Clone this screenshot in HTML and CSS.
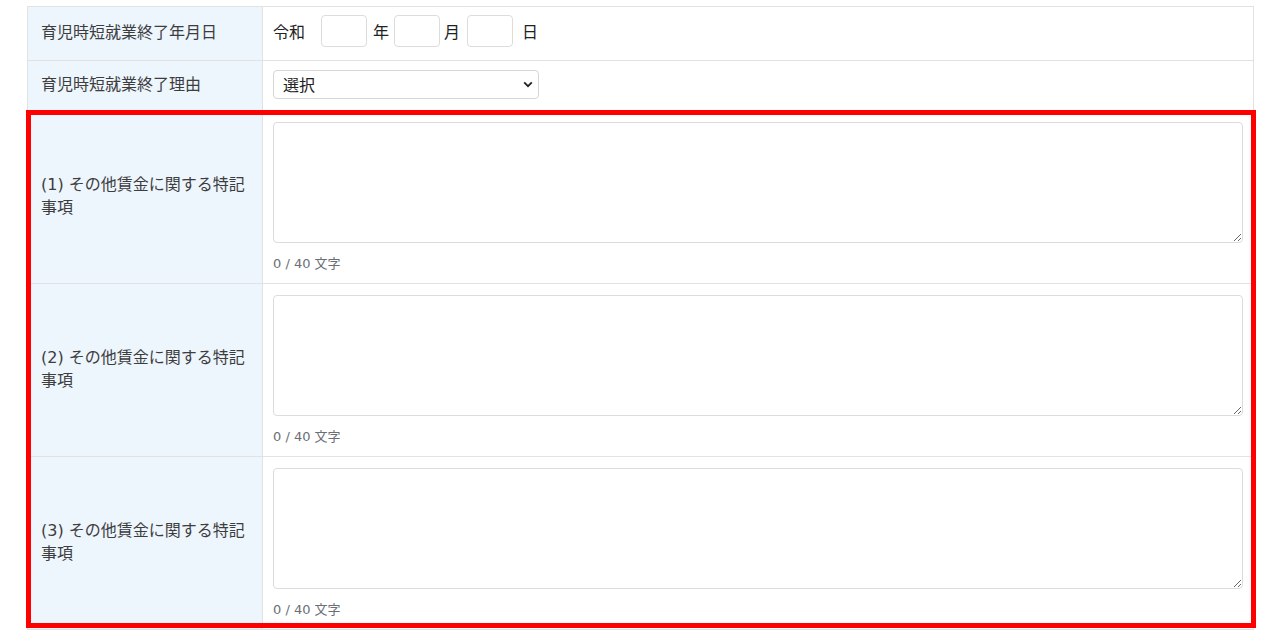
FILE: index.html
```html
<!DOCTYPE html>
<html lang="ja">
<head>
<meta charset="utf-8">
<link rel="stylesheet" href="styles.css">
</head>
<body>
<div class="wrap">
  <table class="form">
    <tr>
      <th class="label">育児時短就業終了年月日</th>
      <td class="cell date-cell">
        <div class="date">
          <span class="era">令和</span>
          <input class="num" type="text">
          <span class="year">年</span>
          <input class="num" type="text">
          <span class="month">月</span>
          <input class="num" type="text">
          <span class="day">日</span>
        </div>
      </td>
    </tr>
    <tr>
      <th class="label">育児時短就業終了理由</th>
      <td class="cell sel-cell">
        <div class="select">
          <span>選択</span>
          <svg class="chev" width="10" height="7" viewBox="0 0 10 7"><path d="M1.2 1.4 L5 5.2 L8.8 1.4" fill="none" stroke="#222" stroke-width="1.8"/></svg>
        </div>
      </td>
    </tr>
    <tr>
      <th class="label">(1) その他賃金に関する特記事項</th>
      <td class="cell">
        <textarea class="ta"></textarea>
        <div class="count">0 / 40 文字</div>
      </td>
    </tr>
    <tr>
      <th class="label">(2) その他賃金に関する特記事項</th>
      <td class="cell">
        <textarea class="ta"></textarea>
        <div class="count">0 / 40 文字</div>
      </td>
    </tr>
    <tr>
      <th class="label">(3) その他賃金に関する特記事項</th>
      <td class="cell">
        <textarea class="ta"></textarea>
        <div class="count">0 / 40 文字</div>
      </td>
    </tr>
  </table>
  <div class="highlight"></div>
</div>
</body>
</html>
```
FILE: styles.css
```css
html, body {
  margin: 0;
  padding: 0;
  background: #fff;
}
body {
  font-family: "DejaVu Sans", "Noto Sans CJK JP", sans-serif;
  color: #3a3a3a;
}
.wrap {
  position: relative;
  padding: 6px 0 0 27px;
  width: 1227px;
}
.form {
  border-collapse: collapse;
  width: 1227px;
  table-layout: fixed;
}
.form th, .form td {
  border: 1px solid #e2e2e2;
}
.label {
  width: 207px;
  background: #edf5fd;
  font-weight: normal;
  text-align: left;
  vertical-align: middle;
  padding: 0 14px 2px 13px;
  font-size: 16px;
  line-height: 23px;
  color: #3d3d3d;
}
.cell {
  padding: 11px 10px 9px 10px;
  vertical-align: top;
}
.date-cell {
  padding: 8px 10px 13px 10px;
}
.date {
  display: flex;
  align-items: center;
  font-size: 16px;
  color: #222;
}
.era {
  margin-right: 16px;
}
.year {
  margin: 0 5px 0 6px;
}
.month {
  margin: 0 7px 0 4px;
}
.day {
  margin-left: 9px;
}
.num {
  width: 46px;
  height: 32px;
  box-sizing: border-box;
  border: 1px solid #dcdcdc;
  border-radius: 4px;
  margin: 0;
  padding: 0;
  background: #fff;
}
.sel-cell {
  padding: 9px 10px 11px 10px;
}
.select {
  width: 266px;
  height: 29px;
  box-sizing: border-box;
  border: 1px solid #d6d6d6;
  border-radius: 4px;
  display: flex;
  align-items: center;
  justify-content: space-between;
  padding: 0 5px 2px 9px;
  font-size: 16px;
  color: #222;
  background: #fff;
}
.chev {
  display: block;
  margin-top: 2px;
}
.ta {
  display: block;
  width: 100%;
  height: 121px;
  box-sizing: border-box;
  border: 1px solid #dcdcdc;
  border-radius: 4px;
  margin: 0;
  padding: 6px;
  resize: vertical;
  font-family: inherit;
}
.count {
  margin-top: 10px;
  font-size: 13px;
  line-height: 21px;
  color: #6a6f75;
}
.highlight {
  position: absolute;
  left: 26px;
  top: 110px;
  width: 1220px;
  height: 508px;
  border: 5px solid #ff0000;
  pointer-events: none;
}
```
